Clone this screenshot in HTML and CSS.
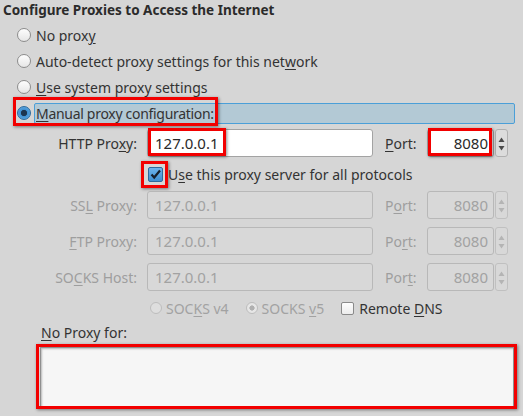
FILE: index.html
```html
<!DOCTYPE html>
<html>
<head>
<meta charset="utf-8">
<link rel="stylesheet" href="styles.css">
</head>
<body>
<div class="page">
  <div class="title">Configure Proxies to Access the Internet</div>
  <div class="options">
    <div class="opt"><span class="radio"></span><span class="opt-label">No prox<u>y</u></span></div>
    <div class="opt"><span class="radio"></span><span class="opt-label">Auto-detect proxy settings for this net<u>w</u>ork</span></div>
    <div class="opt"><span class="radio"></span><span class="opt-label"><u>U</u>se system proxy settings</span></div>
    <div class="opt opt-active"><span class="radio radio-on"></span><span class="opt-label"><span class="tight"><u>M</u>anual proxy configuration:</span></span><div class="mark mark-manual"></div></div>
  </div>

  <div class="form">
    <div class="row">
      <span class="lbl">HTTP Pro<u>x</u>y:</span>
      <div class="field">127.0.0.1<div class="mark mark-http"></div></div>
      <span class="plbl"><u>P</u>ort:</span>
      <div class="port">
        <div class="port-field">8080<div class="mark mark-port"></div></div>
        <div class="spin"><svg width="11" height="26" viewBox="0 0 11 26"><path d="M5.5 7.5 L8.5 12 L2.5 12 Z" fill="#4a4a4a"/><path d="M2.5 16 L8.5 16 L5.5 20.5 Z" fill="#4a4a4a"/></svg></div>
      </div>
    </div>

    <div class="check-row">
      <span class="cb cb-on"><svg width="13" height="13" viewBox="0 0 13 13"><path d="M2.5 6.5 L5.2 9.5 L11 2.5" fill="none" stroke="#16202b" stroke-width="2.2"/></svg><span class="mark mark-cb"></span></span>
      <span class="cb-label">U<u>s</u>e this proxy server for all protocols</span>
    </div>

    <div class="row dis">
      <span class="lbl">SS<u>L</u> Proxy:</span>
      <div class="field">127.0.0.1</div>
      <span class="plbl">P<u>o</u>rt:</span>
      <div class="port">
        <div class="port-field">8080</div>
        <div class="spin"><svg width="11" height="26" viewBox="0 0 11 26"><path d="M5.5 7.5 L8.5 12 L2.5 12 Z" fill="#b4b4b4"/><path d="M2.5 16 L8.5 16 L5.5 20.5 Z" fill="#b4b4b4"/></svg></div>
      </div>
    </div>

    <div class="row dis gap">
      <span class="lbl"><u>F</u>TP Proxy:</span>
      <div class="field">127.0.0.1</div>
      <span class="plbl">Po<u>r</u>t:</span>
      <div class="port">
        <div class="port-field">8080</div>
        <div class="spin"><svg width="11" height="26" viewBox="0 0 11 26"><path d="M5.5 7.5 L8.5 12 L2.5 12 Z" fill="#b4b4b4"/><path d="M2.5 16 L8.5 16 L5.5 20.5 Z" fill="#b4b4b4"/></svg></div>
      </div>
    </div>

    <div class="row dis gap">
      <span class="lbl">SO<u>C</u>KS Host:</span>
      <div class="field">127.0.0.1</div>
      <span class="plbl">Por<u>t</u>:</span>
      <div class="port">
        <div class="port-field">8080</div>
        <div class="spin"><svg width="11" height="26" viewBox="0 0 11 26"><path d="M5.5 7.5 L8.5 12 L2.5 12 Z" fill="#b4b4b4"/><path d="M2.5 16 L8.5 16 L5.5 20.5 Z" fill="#b4b4b4"/></svg></div>
      </div>
    </div>

    <div class="socks-row">
      <span class="sradio"></span><span class="stext">SOC<u>K</u>S v4</span>
      <span class="sradio sradio-on sp"></span><span class="stext">SOCKS <u>v</u>5</span>
      <span class="scb"></span><span class="scb-label">Remote <u>D</u>NS</span>
    </div>

    <div class="np-label"><u>N</u>o Proxy for:</div>
    <div class="ta"><div class="mark mark-ta"></div></div>
  </div>
</div>
</body>
</html>
```

FILE: styles.css
```css
html, body {
  margin: 0;
  padding: 0;
}
body {
  background: #d6d6d6;
  font-family: "Noto Sans", "Open Sans", sans-serif;
  font-size: 14px;
  color: #333333;
  width: 523px;
  height: 416px;
  overflow: hidden;
}
u {
  text-decoration-thickness: 1px;
  text-underline-offset: 2px;
}
.title {
  font-weight: bold;
  font-size: 13.5px;
  line-height: 20px;
  padding-left: 3px;
  color: #2b2b2b;
}
.options {
  margin-top: 2px;
}
.opt {
  position: relative;
  display: flex;
  align-items: center;
  height: 26px;
  padding-left: 17px;
}
.radio {
  flex: none;
  width: 14px;
  height: 14px;
  box-sizing: border-box;
  border: 1px solid #8d8d8d;
  border-radius: 50%;
  background: linear-gradient(#fdfdfd, #e6e6e6);
}
.radio-on {
  border-color: #2c6a9c;
  background: radial-gradient(circle, #1c3550 0 2.8px, #3f8fd0 3.4px, #6cb4ec 100%);
}
.opt-label {
  margin-left: 3px;
  padding: 0 1px;
  border: 1px solid transparent;
  border-radius: 2px;
  line-height: 19px;
}
.opt-active .opt-label {
  flex: 1;
  margin-right: 8px;
  background: #b3c9d5;
  border-color: #4b9fd8;
}
.tight {
  letter-spacing: -0.3px;
}
.mark {
  position: absolute;
  box-sizing: border-box;
  border: 3px solid #f20000;
  box-shadow: 1px 1px 3px rgba(0, 0, 0, 0.45);
  pointer-events: none;
}
.mark-manual {
  left: 13px;
  top: -3px;
  width: 205px;
  height: 29px;
}
.form {
  margin-top: 3px;
}
.row {
  display: flex;
  align-items: center;
  height: 28px;
}
.row.gap {
  margin-top: 8px;
}
.lbl {
  width: 137px;
  text-align: right;
  margin-right: 10px;
}
.field {
  position: relative;
  width: 226px;
  height: 28px;
  box-sizing: border-box;
  border: 1px solid #a3a3a3;
  border-radius: 3px;
  background: #ffffff;
  display: flex;
  align-items: center;
  padding-left: 7px;
  font-size: 15px;
  color: #2a2a2a;
}
.plbl {
  margin-left: 12px;
  width: 42px;
}
.port {
  display: flex;
  height: 28px;
}
.port-field {
  position: relative;
  width: 67px;
  height: 28px;
  box-sizing: border-box;
  border: 1px solid #a3a3a3;
  border-radius: 3px;
  background: #ffffff;
  text-align: right;
  padding-right: 5px;
  font-size: 15px;
  line-height: 26px;
  color: #2a2a2a;
}
.spin {
  width: 13px;
  margin-left: 1px;
  height: 28px;
  box-sizing: border-box;
  border: 1px solid #b0b0b0;
  border-radius: 3px;
  background: #dcdcdc;
  display: flex;
  align-items: center;
  justify-content: center;
}
.mark-http {
  left: 0;
  top: -2px;
  width: 78px;
  height: 28px;
}
.mark-port {
  left: 0;
  top: -2px;
  width: 64px;
  height: 28px;
}
.row.dis .lbl,
.row.dis .plbl {
  color: #9e9e9e;
}
.row.dis .field,
.row.dis .port-field {
  background: #d8d8d8;
  border-color: #b8b8b8;
  color: #a2a2a2;
}
.row.dis .spin {
  border-color: #c0c0c0;
  background: #d8d8d8;
}
.check-row {
  display: flex;
  align-items: center;
  height: 34px;
  padding-left: 148px;
}
.cb {
  position: relative;
  flex: none;
  width: 15px;
  height: 15px;
  box-sizing: border-box;
  border: 1px solid #8d8d8d;
  border-radius: 2px;
  background: linear-gradient(#fdfdfd, #e6e6e6);
  display: flex;
  align-items: center;
  justify-content: center;
}
.cb-on {
  border-color: #2c6a9c;
  background: linear-gradient(#6cb4ec, #3f8fd0);
}
.mark-cb {
  left: -8px;
  top: -7px;
  width: 27px;
  height: 27px;
}
.cb-label {
  margin-left: 5px;
}
.socks-row {
  display: flex;
  align-items: center;
  height: 34px;
  padding-left: 150px;
}
.sradio {
  flex: none;
  width: 12px;
  height: 12px;
  box-sizing: border-box;
  border: 1px solid #bdbdbd;
  border-radius: 50%;
  background: #dedede;
}
.sradio.sp {
  margin-left: 17px;
}
.sradio-on {
  background: radial-gradient(circle, #b0b0b0 0 2.3px, #e6e6e6 2.9px);
}
.stext {
  margin-left: 4px;
  color: #a2a2a2;
}
.scb {
  flex: none;
  margin-left: 17px;
  width: 13px;
  height: 13px;
  box-sizing: border-box;
  border: 1px solid #8a8a8a;
  border-radius: 2px;
  background: linear-gradient(#fdfdfd, #ececec);
}
.scb-label {
  margin-left: 5px;
}
.np-label {
  padding-left: 41px;
  line-height: 16px;
}
.ta {
  position: relative;
  margin: 6px 0 0 40px;
  width: 474px;
  height: 61px;
  box-sizing: border-box;
  border: 1px solid #8f8f8f;
  background: #f6f6f6;
  box-shadow: inset 1px 1px 2px rgba(0, 0, 0, 0.25);
}
.mark-ta {
  left: -5px;
  top: -4px;
  width: 481px;
  height: 65px;
}
```
